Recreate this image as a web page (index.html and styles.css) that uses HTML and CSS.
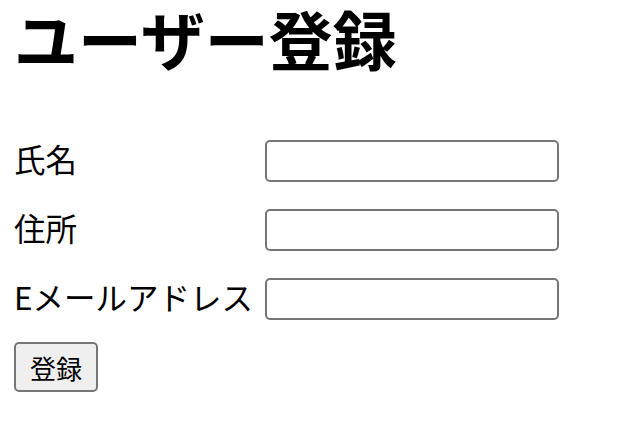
FILE: index.html
```html
<!DOCTYPE html>
<html lang="ja">
<head>
<meta charset="utf-8">
<title>ユーザー登録</title>
<link rel="stylesheet" href="styles.css">
</head>
<body>
<h1 class="title">ユーザー登録</h1>
<form class="form">
  <div class="fields">
    <label class="label" for="name">氏名</label>
    <input class="input" id="name" type="text">
    <label class="label" for="addr">住所</label>
    <input class="input" id="addr" type="text">
    <label class="label" for="mail">Eメールアドレス</label>
    <input class="input" id="mail" type="email">
  </div>
  <button class="button" type="submit">登録</button>
</form>
</body>
</html>
```
FILE: styles.css
```css
html, body {
  background: #ffffff;
}
body {
  margin: 0;
  padding: 0 14px;
  font-family: "Noto Sans CJK JP", "Noto Sans", sans-serif;
  color: #000000;
}
.title {
  font-size: 64px;
  font-weight: 700;
  line-height: 93px;
  margin: -9px 0 0 0;
}
.form {
  margin-top: 56px;
}
.fields {
  display: grid;
  grid-template-columns: 251px 294px;
  row-gap: 27px;
  align-items: start;
}
.label {
  font-size: 31.5px;
  line-height: 36px;
}
.input {
  box-sizing: border-box;
  width: 294px;
  height: 42px;
  margin: 0;
  border: 2px solid #767676;
  border-radius: 5px;
  background: #ffffff;
  font-size: 26px;
}
.button {
  box-sizing: border-box;
  margin-top: 22px;
  width: 84px;
  height: 50px;
  padding: 0;
  border: 2px solid #767676;
  border-radius: 5px;
  background: #efefef;
  font-family: "Noto Sans CJK JP", sans-serif;
  font-size: 26px;
  color: #000000;
}
```
